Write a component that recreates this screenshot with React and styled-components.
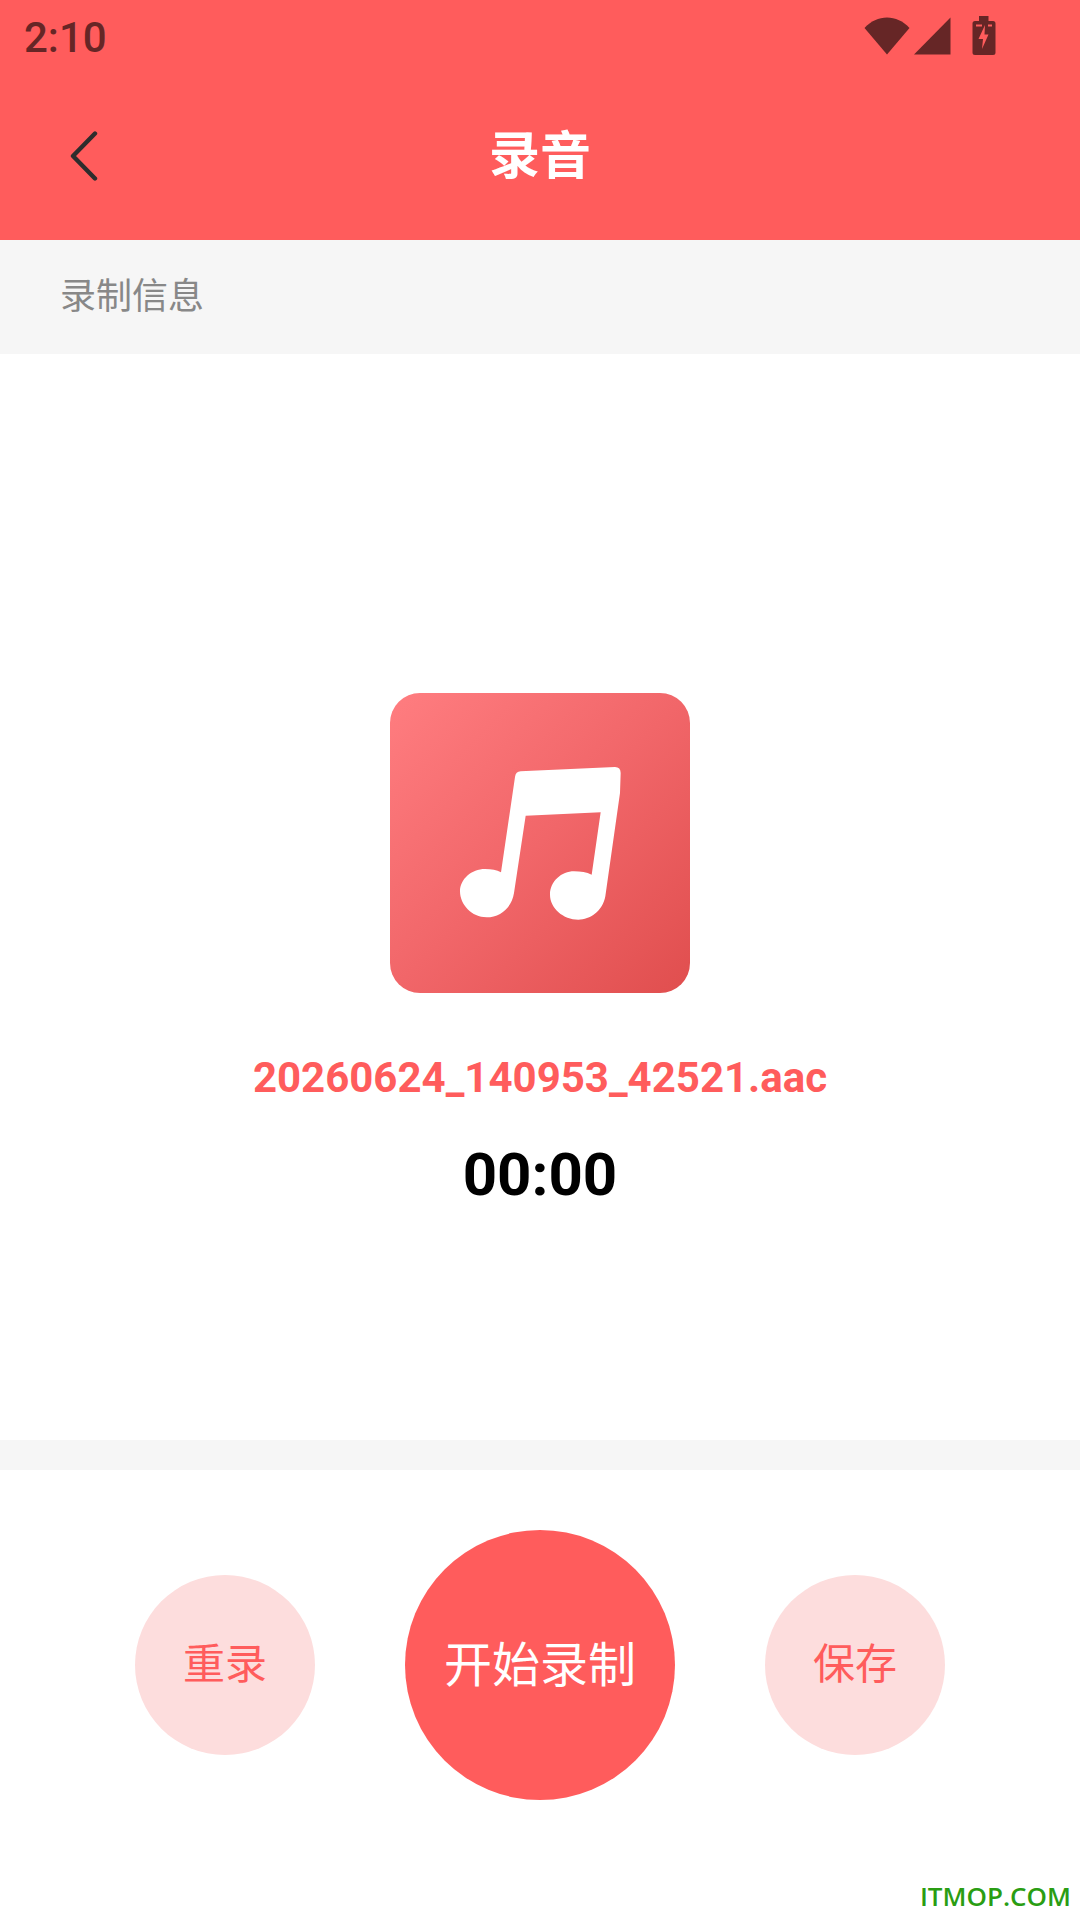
import styled, { createGlobalStyle } from "styled-components";

const GlobalStyle = createGlobalStyle`
  html, body {
    margin: 0;
    padding: 0;
    background: #fff;
  }
  * {
    box-sizing: border-box;
  }
`;

const Page = styled.div`
  position: relative;
  width: 1080px;
  height: 1920px;
  display: flex;
  flex-direction: column;
  background: #fff;
  overflow: hidden;
  font-family: Roboto, "Noto Sans CJK SC", sans-serif;
`;

const Header = styled.header`
  height: 240px;
  background: #ff5c5c;
  display: flex;
  flex-direction: column;
`;

const StatusBar = styled.div`
  height: 72px;
  display: flex;
  align-items: center;
  justify-content: space-between;
  padding: 2px 84px 0 24px;
`;

const Clock = styled.span`
  font-size: 42px;
  font-weight: 500;
  color: #662626;
`;

const StatusIcons = styled.div`
  display: flex;
  align-items: center;
  padding-bottom: 3px;
`;

const Toolbar = styled.div`
  flex: 1;
  display: flex;
  align-items: center;
  justify-content: center;
  position: relative;
`;

const BackButton = styled.button`
  position: absolute;
  left: 60px;
  top: 50%;
  transform: translateY(-50%);
  width: 48px;
  height: 60px;
  padding: 0;
  border: none;
  background: none;
  display: flex;
  align-items: center;
  justify-content: center;
`;

const Title = styled.h1`
  margin: 0 0 8px;
  font-size: 51px;
  font-weight: 700;
  color: #fff;
`;

const InfoBar = styled.div`
  height: 114px;
  display: flex;
  align-items: center;
  padding: 0 0 8px 60px;
  background: #f6f6f6;
  font-size: 36px;
  color: #888;
`;

const Recorder = styled.main`
  height: 1086px;
  display: flex;
  flex-direction: column;
  align-items: center;
  padding-top: 339px;
`;

const Cover = styled.div`
  width: 300px;
  height: 300px;
  border-radius: 30px;
  background: linear-gradient(135deg, #ff7d80 0%, #f16669 50%, #e04e4e 100%);
`;

const FileName = styled.div`
  margin-top: 57px;
  font-size: 42px;
  line-height: 56px;
  font-weight: 700;
  color: #ff5c5c;
`;

const Timer = styled.div`
  margin-top: 34px;
  font-size: 60px;
  line-height: 70px;
  font-weight: 700;
  color: #000;
`;

const Divider = styled.div`
  height: 30px;
  background: #f6f6f6;
`;

const Controls = styled.div`
  flex: 1;
  display: flex;
  align-items: flex-start;
  justify-content: center;
  gap: 90px;
  padding-top: 60px;
`;

const RoundButton = styled.button`
  width: ${(p) => (p.$primary ? 270 : 180)}px;
  height: ${(p) => (p.$primary ? 270 : 180)}px;
  margin-top: ${(p) => (p.$primary ? 0 : 45)}px;
  padding: 0 0 9px;
  border: none;
  border-radius: 50%;
  background: ${(p) => (p.$primary ? "#ff5c5c" : "#fddddd")};
  color: ${(p) => (p.$primary ? "#fff" : "#ff5c5c")};
  font-family: "Noto Sans CJK SC", sans-serif;
  font-size: ${(p) => (p.$primary ? 48 : 42)}px;
`;

const Watermark = styled.span`
  position: absolute;
  right: 9px;
  bottom: 9px;
  font-family: "Open Sans", sans-serif;
  font-size: 26px;
  line-height: 30px;
  font-weight: 600;
  color: #2a9d13;
`;

const WifiIcon = () => (
  <svg width="46" height="38" viewBox="0 0 46 38" style={{ marginLeft: 1, marginRight: 4 }}>
    <path d="M0.5 11 C13 -3 33 -3 45.5 11 L23 37.5 Z" fill="#662626" />
  </svg>
);

const SignalIcon = () => (
  <svg width="37" height="38" viewBox="0 0 37 38">
    <path d="M0 37.5 L36.5 0.5 V37.5 Z" fill="#662626" />
  </svg>
);

const BatteryIcon = () => (
  <svg width="24" height="40" viewBox="0 0 24 40" style={{ marginLeft: 21 }}>
    <path
      d="M7 0 H16.5 V5 H21 Q23.5 5 23.5 7.5 V36.5 Q23.5 39 21 39 H3 Q0.5 39 0.5 36.5 V7.5 Q0.5 5 3 5 H7 Z"
      fill="#662626"
    />
    <path d="M4 8.5 H10 V10.5 H4 Z M16 8.5 H20 V10.5 H16 Z" fill="#ff5c5c" />
    <path d="M13 9 L6.5 23 H11 L10 33 L16.5 18.5 H12.5 Z" fill="#ff5c5c" />
  </svg>
);

const BackIcon = () => (
  <svg width="30" height="50" viewBox="0 0 30 50">
    <path
      d="M26 2.5 L4 25 L26 47.5"
      fill="none"
      stroke="#2d2d2d"
      strokeWidth="4.4"
      strokeLinecap="round"
      strokeLinejoin="round"
    />
  </svg>
);

const NoteIcon = () => (
  <svg width="300" height="300" viewBox="60 40 900 900">
    <path
      d="M435 292 Q437 276 452 275 L735 262 Q752 262 752 280 L750 340 L706 650
         C698 695 660 720 625 720 C580 720 540 685 540 645 C540 605 575 575 612 575
         C632 575 650 578 665 585 L692 398 L467 408 L432 640
         C425 685 390 713 350 713 C305 713 270 675 270 635 C270 598 305 568 345 568
         C365 568 380 571 393 578 Z"
      fill="#fff"
    />
  </svg>
);

const App = () => {
  return (
    <Page>
      <GlobalStyle />
      <Header>
        <StatusBar>
          <Clock>2:10</Clock>
          <StatusIcons>
            <WifiIcon />
            <SignalIcon />
            <BatteryIcon />
          </StatusIcons>
        </StatusBar>
        <Toolbar>
          <BackButton>
            <BackIcon />
          </BackButton>
          <Title>录音</Title>
        </Toolbar>
      </Header>
      <InfoBar>录制信息</InfoBar>
      <Recorder>
        <Cover>
          <NoteIcon />
        </Cover>
        <FileName>20260624_140953_42521.aac</FileName>
        <Timer>00:00</Timer>
      </Recorder>
      <Divider />
      <Controls>
        <RoundButton>重录</RoundButton>
        <RoundButton $primary>开始录制</RoundButton>
        <RoundButton>保存</RoundButton>
      </Controls>
      <Watermark>ITMOP.COM</Watermark>
    </Page>
  );
};

export default App;
